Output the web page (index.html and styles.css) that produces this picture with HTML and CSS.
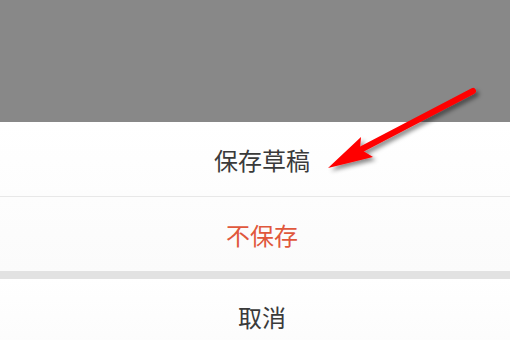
FILE: index.html
```html
<!DOCTYPE html>
<html lang="zh-CN">
<head>
<meta charset="utf-8">
<title>保存草稿</title>
<link rel="stylesheet" href="styles.css">
</head>
<body>
<div class="screen">
  <div class="mask"></div>
  <div class="sheet">
    <div class="group">
      <div class="item">保存草稿</div>
      <div class="item danger">不保存</div>
    </div>
    <div class="gap"></div>
    <div class="group">
      <div class="item">取消</div>
    </div>
  </div>
  <svg class="arrow" width="510" height="340" viewBox="0 0 510 340" xmlns="http://www.w3.org/2000/svg">
    <defs>
      <filter id="sh" x="-20%" y="-20%" width="140%" height="140%">
        <feDropShadow dx="3" dy="3" stdDeviation="2" flood-color="#000" flood-opacity="0.45"/>
      </filter>
    </defs>
    <g filter="url(#sh)" fill="#ff0000" stroke="none">
      <line x1="473" y1="91" x2="362" y2="149" stroke="#ff0000" stroke-width="6" stroke-linecap="round"/>
      <polygon points="328,168 361,137 360,149 373,157"/>
    </g>
  </svg>
</div>
</body>
</html>
```

FILE: styles.css
```css
* { box-sizing: border-box; }
html, body {
  margin: 0;
  padding: 0;
  width: 510px;
  height: 340px;
  overflow: hidden;
  background: #ffffff;
}
.screen {
  position: relative;
  width: 510px;
  height: 340px;
  display: flex;
  flex-direction: column;
  font-family: "Noto Sans CJK SC", "Noto Sans", sans-serif;
}
.mask {
  height: 122px;
  flex: none;
  background: #888888;
}
.sheet {
  flex: 1;
  display: flex;
  flex-direction: column;
  background: #ffffff;
}
.group {
  display: flex;
  flex-direction: column;
  background: linear-gradient(#ffffff, #fbfbfb);
}
.item {
  height: 75px;
  display: flex;
  align-items: center;
  justify-content: center;
  padding-left: 14px;
  font-size: 24px;
  color: #3a3a3a;
  border-bottom: 1px solid #e8e8e8;
}
.item.danger {
  color: #e0583c;
  height: 74px;
  border-bottom: none;
}
.gap {
  height: 8px;
  flex: none;
  background: #e2e2e2;
}
.arrow {
  position: absolute;
  left: 0;
  top: 0;
  pointer-events: none;
}
```
